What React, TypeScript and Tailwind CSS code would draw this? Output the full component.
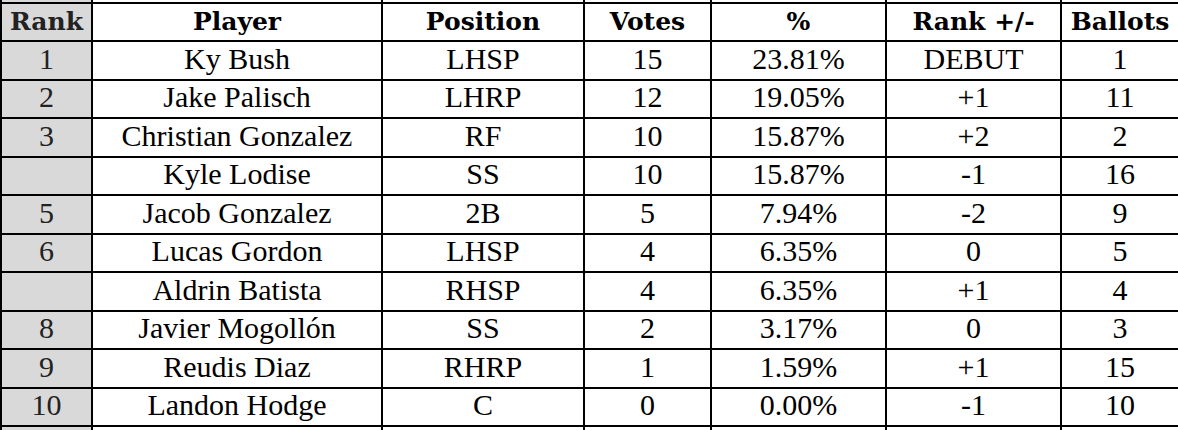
const ROWS = [
  { rank: "1", player: "Ky Bush", pos: "LHSP", votes: "15", pct: "23.81%", delta: "DEBUT", ballots: "1" },
  { rank: "2", player: "Jake Palisch", pos: "LHRP", votes: "12", pct: "19.05%", delta: "+1", ballots: "11" },
  { rank: "3", player: "Christian Gonzalez", pos: "RF", votes: "10", pct: "15.87%", delta: "+2", ballots: "2" },
  { rank: "", player: "Kyle Lodise", pos: "SS", votes: "10", pct: "15.87%", delta: "-1", ballots: "16" },
  { rank: "5", player: "Jacob Gonzalez", pos: "2B", votes: "5", pct: "7.94%", delta: "-2", ballots: "9" },
  { rank: "6", player: "Lucas Gordon", pos: "LHSP", votes: "4", pct: "6.35%", delta: "0", ballots: "5" },
  { rank: "", player: "Aldrin Batista", pos: "RHSP", votes: "4", pct: "6.35%", delta: "+1", ballots: "4" },
  { rank: "8", player: "Javier Mogollón", pos: "SS", votes: "2", pct: "3.17%", delta: "0", ballots: "3" },
  { rank: "9", player: "Reudis Diaz", pos: "RHRP", votes: "1", pct: "1.59%", delta: "+1", ballots: "15" },
  { rank: "10", player: "Landon Hodge", pos: "C", votes: "0", pct: "0.00%", delta: "-1", ballots: "10" },
];

const HEADERS = ["Rank", "Player", "Position", "Votes", "%", "Rank +/-", "Ballots"];

export default function App() {
  const cell = "border-2 border-black p-0 text-center align-middle";
  return (
    <div
      className="w-[1178px] h-[430px] overflow-hidden bg-white text-black"
      style={{ fontFamily: '"Liberation Serif", serif' }}
    >
      <table className="table-fixed border-collapse w-[1178px] text-[30px] leading-none">
        <colgroup>
          <col className="w-[91px]" />
          <col className="w-[290px]" />
          <col className="w-[202px]" />
          <col className="w-[127px]" />
          <col className="w-[175px]" />
          <col className="w-[175px]" />
          <col className="w-[118px]" />
        </colgroup>
        <tbody>
          {/* tail of the row above */}
          <tr>
            {HEADERS.map((h, i) => (
              <td key={h} className={`border-2 border-t-0 border-black p-0 h-[3px] ${i === 0 ? "bg-[#d9d9d9]" : ""}`} />
            ))}
          </tr>
          <tr>
            {HEADERS.map((h, i) => (
              <td
                key={h}
                className={`${cell} h-[38px] font-['DejaVu_Serif',serif] text-[25px] font-bold pb-[2px] ${i === 0 ? "bg-[#d9d9d9] text-[#222]" : ""}`}
              >
                {h}
              </td>
            ))}
          </tr>
          {ROWS.map((r, idx) => (
            <tr key={idx}>
              <td className={`${cell} h-[38.5px] pb-[3px] bg-[#d9d9d9] text-[#222]`}>{r.rank}</td>
              <td className={`${cell} pb-[3px]`}>{r.player}</td>
              <td className={`${cell} pb-[3px]`}>{r.pos}</td>
              <td className={`${cell} pb-[3px]`}>{r.votes}</td>
              <td className={`${cell} pb-[3px]`}>{r.pct}</td>
              <td className={`${cell} pb-[3px]`}>{r.delta}</td>
              <td className={`${cell} pb-[3px]`}>{r.ballots}</td>
            </tr>
          ))}
          <tr>
            {HEADERS.map((h, i) => (
              <td key={h} className={`border-2 border-black p-0 h-[38px] ${i === 0 ? "bg-[#d9d9d9]" : ""}`} />
            ))}
          </tr>
        </tbody>
      </table>
    </div>
  );
}
